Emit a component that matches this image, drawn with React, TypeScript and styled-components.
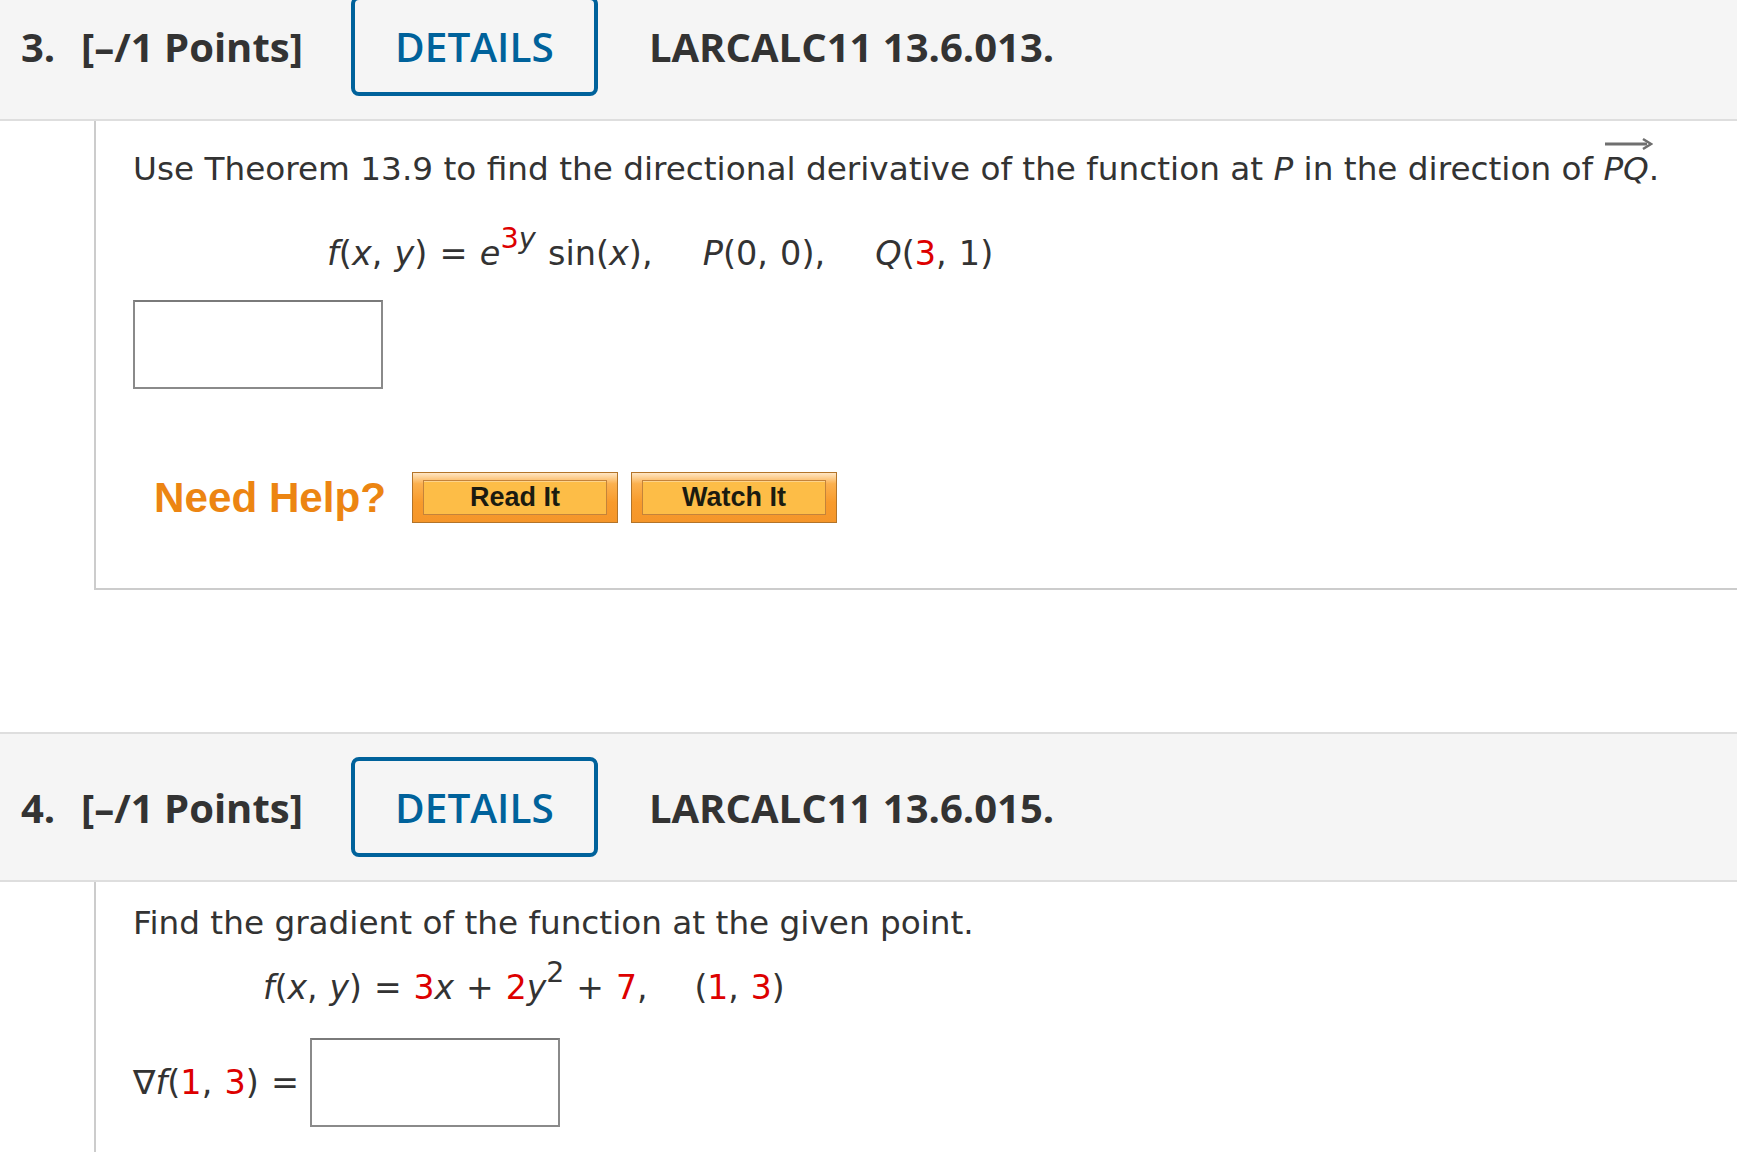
import React from 'react';
import styled, { createGlobalStyle } from 'styled-components';

const GlobalStyle = createGlobalStyle`
  html, body {
    margin: 0;
    padding: 0;
    background: #ffffff;
    overflow: hidden;
  }
`;

const Page = styled.div`
  margin-top: -29px;
  width: 1737px;
`;

const Question = styled.section`
  & + & {
    margin-top: 142px;
  }
`;

const Header = styled.div`
  display: flex;
  align-items: center;
  height: 146px;
  padding-left: 21px;
  background: #f5f5f5;
  border-top: 2px solid #dedede;
  border-bottom: 2px solid #dedede;
  font-family: 'Open Sans', 'DejaVu Sans', sans-serif;
  font-weight: 700;
  font-size: 40px;
  color: #333333;
`;

const QNumber = styled.span`
  width: 60px;
`;

const Points = styled.span``;

const DetailsButton = styled.button`
  margin-left: 48px;
  width: 247px;
  height: 100px;
  box-sizing: border-box;
  border: 4px solid #00629b;
  border-radius: 8px;
  background: transparent;
  font-family: 'Open Sans', 'DejaVu Sans', sans-serif;
  font-weight: 600;
  font-size: 40.5px;
  color: #00629b;
  padding: 0;
  cursor: pointer;
`;

const Code = styled.span`
  margin-left: 51px;
`;

const Body = styled.div<{ $top: number; $closed?: boolean }>`
  margin-left: 94px;
  border-left: 2px solid #cccccc;
  border-bottom: ${(p) => (p.$closed ? '2px solid #cccccc' : 'none')};
  padding: ${(p) => p.$top}px 0 ${(p) => (p.$closed ? 65 : 40)}px 37px;
  font-family: 'DejaVu Sans', Verdana, sans-serif;
  font-size: 32.7px;
  line-height: 40px;
  color: #333333;
`;

const Line = styled.div<{ $indent?: number; $gap?: number }>`
  margin-top: ${(p) => p.$gap ?? 0}px;
  padding-left: ${(p) => p.$indent ?? 0}px;
  white-space: nowrap;
`;

const Formula = styled(Line)<{ $size?: number }>`
  font-size: ${(p) => p.$size ?? 33.5}px;
  word-spacing: 1.5px;
`;

const I = styled.i`
  font-style: italic;
`;

const Red = styled.span`
  color: #dd0000;
`;

const Sup = styled.span`
  font-size: 0.86em;
  line-height: 0;
  vertical-align: 17px;
`;

const Gap = styled.span<{ $w?: number }>`
  display: inline-block;
  width: ${(p) => p.$w ?? 38}px;
`;

const Vec = styled.span`
  position: relative;
  display: inline-block;
`;

const VecArrow = styled.svg`
  position: absolute;
  left: 2px;
  top: -12px;
  width: 48px;
  height: 14px;
`;

const AnswerBox = styled.input<{ $gap: number }>`
  display: block;
  margin-top: ${(p) => p.$gap}px;
  width: 250px;
  height: 89px;
  box-sizing: border-box;
  border: 2px solid #8a8a8a;
  border-top-color: #7a7a7a;
  background: #ffffff;
  outline: none;
`;

const InlineBox = styled(AnswerBox)`
  display: inline-block;
  margin: 0 0 0 11px;
`;

const HelpRow = styled.div`
  display: flex;
  align-items: center;
  margin-top: 83px;
  padding-left: 21px;
`;

const HelpLabel = styled.span`
  font-family: 'Liberation Sans', Arial, sans-serif;
  font-weight: 700;
  font-size: 42.2px;
  line-height: 51px;
  color: #ec8512;
  margin-right: 26px;
`;

const HelpButton = styled.button`
  display: flex;
  width: 206px;
  height: 51px;
  box-sizing: border-box;
  padding: 7px 10px 7px 10px;
  border: 1px solid #b37429;
  background: linear-gradient(#ffe6c4 0%, #fbb04e 22%, #f89b2c 60%, #f5962a 100%);
  cursor: pointer;
  & + & {
    margin-left: 13px;
  }
`;

const HelpButtonFace = styled.span`
  flex: 1;
  display: flex;
  align-items: center;
  justify-content: center;
  border: 1px solid #c4833a;
  background: #fdbd47;
  box-shadow: inset 0 1px 0 #fdd38a;
  font-family: 'Liberation Sans', Arial, sans-serif;
  font-weight: 700;
  font-size: 27px;
  color: #1b1b10;
`;

const GradientRow = styled.div`
  display: flex;
  align-items: center;
  margin-top: 30px;
  white-space: nowrap;
  font-size: 33.5px;
  word-spacing: 1.5px;
`;

const App: React.FC = () => {
  return (
    <Page>
      <GlobalStyle />
      <Question>
        <Header>
          <QNumber>3.</QNumber>
          <Points>[–/1 Points]</Points>
          <DetailsButton>DETAILS</DetailsButton>
          <Code>LARCALC11 13.6.013.</Code>
        </Header>
        <Body $top={28} $closed>
          <Line>
            Use Theorem 13.9 to find the directional derivative of the function at <I>P</I> in the
            direction of{' '}
            <Vec>
              <VecArrow viewBox="0 0 48 14">
                <line x1="0" y1="7" x2="42" y2="7" stroke="#6f6f6f" strokeWidth="3" />
                <path d="M38 2 L46 7 L38 12" fill="none" stroke="#6f6f6f" strokeWidth="2.5" />
              </VecArrow>
              <I>PQ</I>
            </Vec>
            .
          </Line>
          <Formula $indent={194} $gap={45}>
            <I>f</I>(<I>x</I>, <I>y</I>) = <I>e</I>
            <Sup>
              <Red>3</Red>
              <I>y</I>
            </Sup>{' '}
            sin(<I>x</I>),<Gap /> <I>P</I>(0, 0),<Gap /> <I>Q</I>(<Red>3</Red>, 1)
          </Formula>
          <AnswerBox $gap={26} />
          <HelpRow>
            <HelpLabel>Need Help?</HelpLabel>
            <HelpButton>
              <HelpButtonFace>Read It</HelpButtonFace>
            </HelpButton>
            <HelpButton>
              <HelpButtonFace>Watch It</HelpButtonFace>
            </HelpButton>
          </HelpRow>
        </Body>
      </Question>
      <Question>
        <Header>
          <QNumber>4.</QNumber>
          <Points>[–/1 Points]</Points>
          <DetailsButton>DETAILS</DetailsButton>
          <Code>LARCALC11 13.6.015.</Code>
        </Header>
        <Body $top={21}>
          <Line>Find the gradient of the function at the given point.</Line>
          <Formula $indent={130} $gap={25} $size={33}>
            <I>f</I>(<I>x</I>, <I>y</I>) = <Red>3</Red>
            <I>x</I> + <Red>2</Red>
            <I>y</I>
            <Sup>2</Sup> + <Red>7</Red>,<Gap $w={35} /> (<Red>1</Red>, <Red>3</Red>)
          </Formula>
          <GradientRow>
            <span>
              ∇<I>f</I>(<Red>1</Red>, <Red>3</Red>) =
            </span>
            <InlineBox $gap={0} />
          </GradientRow>
        </Body>
      </Question>
    </Page>
  );
};

export default App;
